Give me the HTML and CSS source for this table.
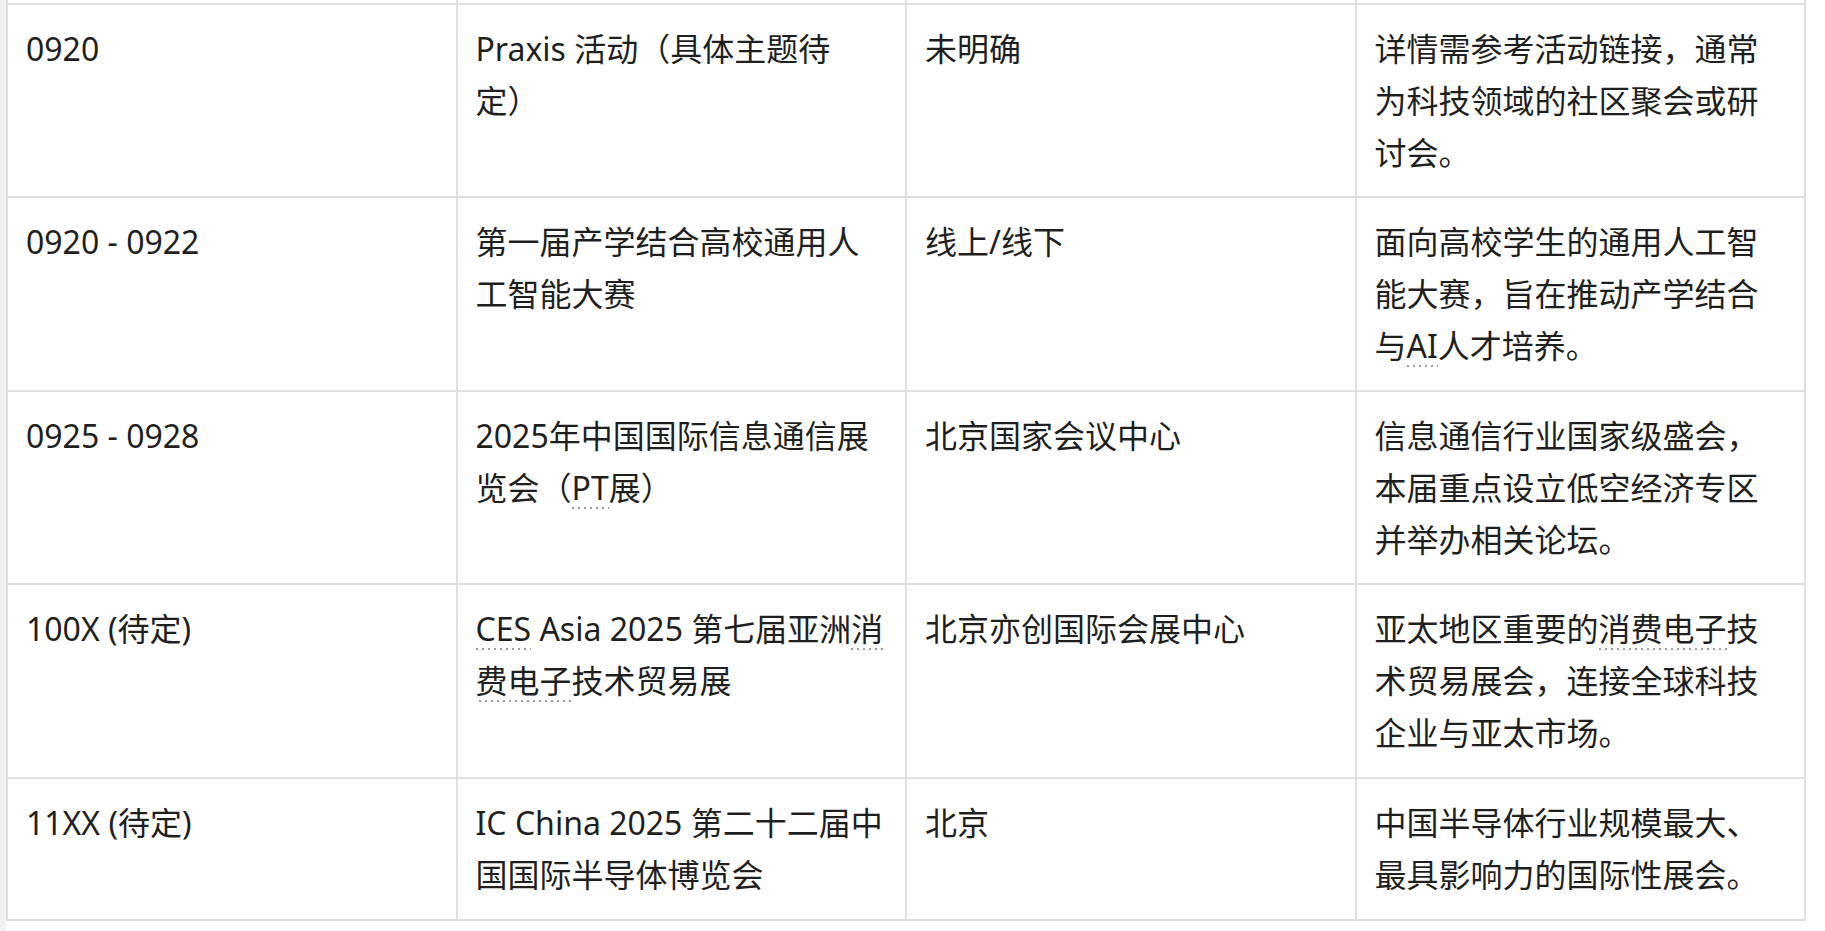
FILE: index.html
```html
<!DOCTYPE html>
<html lang="zh-CN">
<head>
    <meta charset="UTF-8">
    <meta name="viewport" content="width=device-width, initial-scale=1.0">
    <title>活动日程</title>
    <link rel="stylesheet" href="styles.css">
</head>
<body>

<div class="page">
    <div class="gutter"></div>
    <table class="events">
        <colgroup>
            <col class="col-date">
            <col class="col-name">
            <col class="col-place">
            <col class="col-note">
        </colgroup>
        <!-- tail of the previous row, scrolled off the top -->
        <tr class="cut"><td></td><td></td><td></td><td></td></tr>
        <tr>
            <td>0920</td>
            <td>Praxis 活动（具体主题待定）</td>
            <td>未明确</td>
            <td>详情需参考活动链接，通常为科技领域的社区聚会或研讨会。</td>
        </tr>
        <tr>
            <td>0920 - 0922</td>
            <td>第一届产学结合高校通用人工智能大赛</td>
            <td>线上/线下</td>
            <td>面向高校学生的通用人工智能大赛，旨在推动产学结合与<span class="term">AI</span>人才培养。</td>
        </tr>
        <tr>
            <td>0925 - 0928</td>
            <td>2025年中国国际信息通信展览会（<span class="term">PT</span>展）</td>
            <td>北京国家会议中心</td>
            <td>信息通信行业国家级盛会，本届重点设立低空经济专区并举办相关论坛。</td>
        </tr>
        <tr>
            <td>100X (待定)</td>
            <td><span class="term">CES</span> Asia 2025 第七届亚洲<span class="term">消费电子</span>技术贸易展</td>
            <td>北京亦创国际会展中心</td>
            <td>亚太地区重要的<span class="term">消费电子</span>技术贸易展会，连接全球科技企业与亚太市场。</td>
        </tr>
        <tr>
            <td>11XX (待定)</td>
            <td>IC China 2025 第二十二届中国国际半导体博览会</td>
            <td>北京</td>
            <td>中国半导体行业规模最大、最具影响力的国际性展会。</td>
        </tr>
    </table>
</div>

</body>
</html>
```

FILE: styles.css
```css
body {
    margin: 0;
    background: #fff;
    font-family: "Noto Sans", "Noto Sans CJK SC", sans-serif;
    color: #1f1f1f;
}
.page {
    display: flex;
    align-items: flex-start;
    height: 931px;
    overflow: hidden;
}
.gutter {
    flex: none;
    align-self: stretch;
    width: 6px;
    background: #f1f2f4;
}
.events {
    flex: none;
    width: 1800px;
    border-collapse: collapse;
    table-layout: fixed;
    font-size: 32px;
    line-height: 1.62;
    text-spacing-trim: space-all;
}
.events col {
    width: 25%;
}
.events td {
    border: 2px solid #dedfe1;
    padding: 18px 18px;
    vertical-align: top;
}
.events .cut td {
    height: 3px;
    padding: 0;
    border-top: 0;
}
.term {
    background-image: linear-gradient(to right, #9c9c9c 2px, transparent 2px);
    background-size: 6px 2px;
    background-repeat: repeat-x;
    background-position: 0 100%;
}
```
